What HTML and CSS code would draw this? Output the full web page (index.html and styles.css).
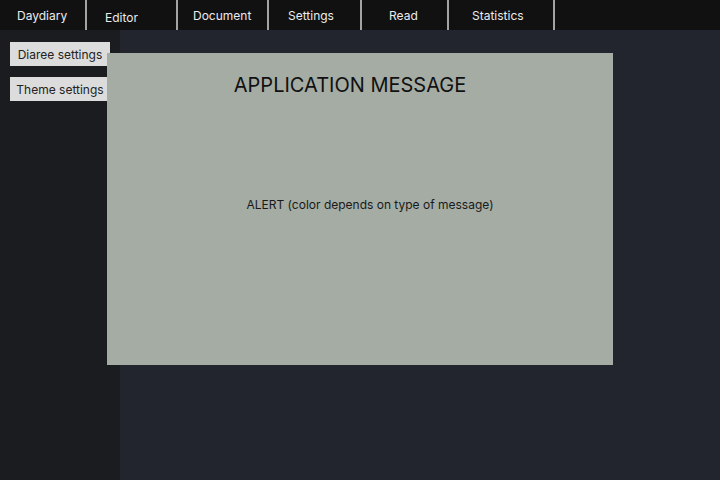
FILE: index.html
```html
<!DOCTYPE html>
<html>
<head>
<meta charset="utf-8">
<link rel="stylesheet" href="styles.css">
</head>
<body>
<nav class="topbar">
  <div class="tab tab-daydiary">Daydiary</div>
  <div class="tab tab-editor">Editor</div>
  <div class="tab tab-document">Document</div>
  <div class="tab tab-settings">Settings</div>
  <div class="tab tab-read">Read</div>
  <div class="tab tab-stats">Statistics</div>
</nav>
<div class="layout">
  <aside class="sidebar">
    <button class="side-btn">Diaree settings</button>
    <button class="side-btn">Theme settings</button>
  </aside>
  <main class="main"></main>
</div>
<div class="message">
  <h1 class="message-title">APPLICATION MESSAGE</h1>
  <p class="message-alert">ALERT (color depends on type of message)</p>
</div>
</body>
</html>
```

FILE: styles.css
```css
* { box-sizing: border-box; }
html, body {
  margin: 0;
  padding: 0;
  width: 720px;
  height: 480px;
  overflow: hidden;
  font-family: Inter, "Noto Sans", sans-serif;
}
body {
  display: flex;
  flex-direction: column;
  background: #22252d;
  position: relative;
}
.topbar {
  height: 30px;
  flex: none;
  display: flex;
  background: #111111;
}
.tab {
  height: 30px;
  color: #ececec;
  font-size: 12px;
  line-height: 30px;
  padding-top: 1px;
  border-right: 2px solid #a3a3a3;
  white-space: nowrap;
}
.tab-daydiary { width: 87px; padding-left: 17px; }
.tab-editor { width: 91px; padding-left: 18px; padding-top: 3px; }
.tab-document { width: 91px; padding-left: 15px; }
.tab-settings { width: 93px; padding-left: 19px; }
.tab-read { width: 87px; padding-left: 27px; }
.tab-stats { width: 106px; padding-left: 23px; }
.layout {
  flex: 1;
  display: flex;
}
.sidebar {
  width: 120px;
  background: #1b1c20;
  display: flex;
  flex-direction: column;
  align-items: flex-start;
  gap: 11px;
  padding: 12px 0 0 10px;
}
.side-btn {
  width: 100px;
  height: 24px;
  border: none;
  border-radius: 0;
  background: #dcdcdc;
  color: #222222;
  font-family: Inter, "Noto Sans", sans-serif;
  font-size: 12px;
  padding: 0;
  text-align: center;
}
.main {
  flex: 1;
  background: #22252d;
}
.message {
  position: absolute;
  left: 107px;
  top: 53px;
  width: 506px;
  height: 312px;
  background: #a4aca4;
  display: flex;
  flex-direction: column;
}
.message-title {
  margin: 20px 0 0 0;
  padding-right: 20px;
  text-align: center;
  font-weight: 400;
  font-size: 20px;
  line-height: 24px;
  color: #111111;
}
.message-alert {
  margin: 100px 0 0 0;
  padding-left: 20px;
  text-align: center;
  font-size: 12px;
  line-height: 16px;
  color: #1a1a1a;
}
```
